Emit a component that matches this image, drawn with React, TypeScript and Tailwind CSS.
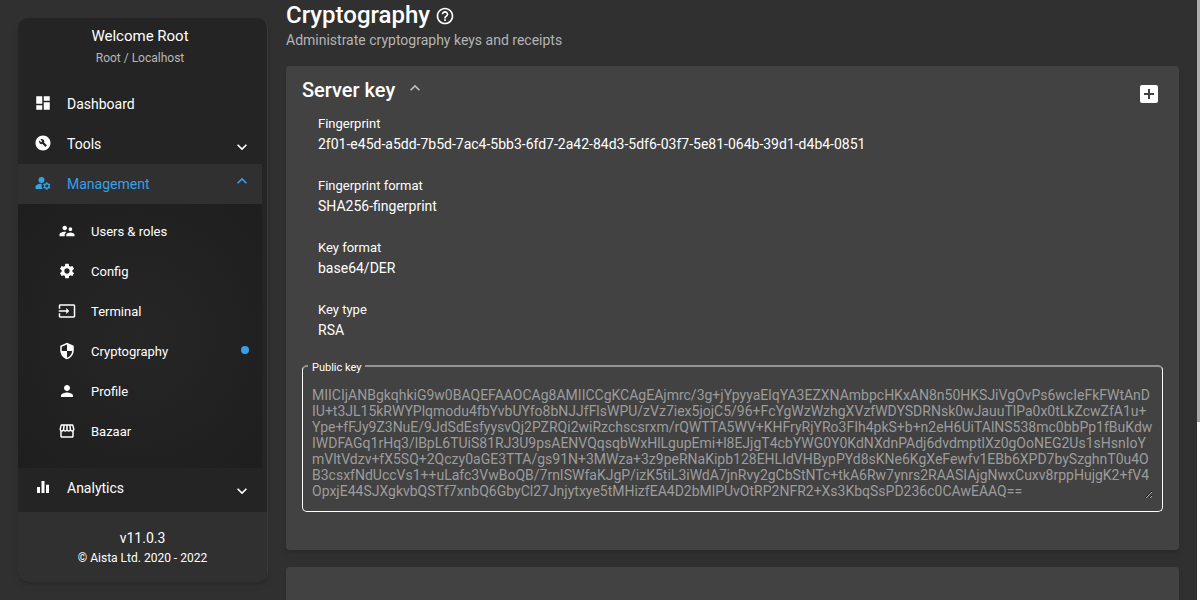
import type { ComponentType } from "react";
import {
  MdAddBox,
  MdBuildCircle,
  MdDashboard,
  MdEqualizer,
  MdHelpOutline,
  MdInput,
  MdKeyboardArrowDown,
  MdKeyboardArrowUp,
  MdManageAccounts,
  MdOutlineStorefront,
  MdPerson,
  MdSecurity,
  MdSettings,
  MdSupervisorAccount,
} from "react-icons/md";

type Icon = ComponentType<{ className?: string }>;

const PUBLIC_KEY = [
  "MIICIjANBgkqhkiG9w0BAQEFAAOCAg8AMIICCgKCAgEAjmrc/3g+jYpyyaElqYA3EZXNAmbpcHKxAN8n50HKSJiVgOvPs6wcIeFkFWtAnD",
  "IU+t3JL15kRWYPlqmodu4fbYvbUYfo8bNJJfFlsWPU/zVz7iex5jojC5/96+FcYgWzWzhgXVzfWDYSDRNsk0wJauuTlPa0x0tLkZcwZfA1u+",
  "Ype+fFJy9Z3NuE/9JdSdEsfyysvQj2PZRQi2wiRzchscsrxm/rQWTTA5WV+KHFryRjYRo3FIh4pkS+b+n2eH6UiTAlNS538mc0bbPp1fBuKdw",
  "IWDFAGq1rHq3/lBpL6TUiS81RJ3U9psAENVQqsqbWxHlLgupEmi+l8EJjgT4cbYWG0Y0KdNXdnPAdj6dvdmptlXz0gOoNEG2Us1sHsnIoY",
  "mVltVdzv+fX5SQ+2Qczy0aGE3TTA/gs91N+3MWza+3z9peRNaKipb128EHLIdVHBypPYd8sKNe6KgXeFewfv1EBb6XPD7bySzghnT0u4O",
  "B3csxfNdUccVs1++uLafc3VwBoQB/7rnISWfaKJgP/izK5tiL3iWdA7jnRvy2gCbStNTc+tkA6Rw7ynrs2RAASIAjgNwxCuxv8rppHujgK2+fV4",
  "OpxjE44SJXgkvbQSTf7xnbQ6GbyCl27Jnjytxye5tMHizfEA4D2bMlPUvOtRP2NFR2+Xs3KbqSsPD236c0CAwEAAQ==",
].join("\n");

const MANAGEMENT: { label: string; icon: Icon; current?: boolean }[] = [
  { label: "Users & roles", icon: MdSupervisorAccount },
  { label: "Config", icon: MdSettings },
  { label: "Terminal", icon: MdInput },
  { label: "Cryptography", icon: MdSecurity, current: true },
  { label: "Profile", icon: MdPerson },
  { label: "Bazaar", icon: MdOutlineStorefront },
];

const DETAILS = [
  ["Fingerprint", "2f01-e45d-a5dd-7b5d-7ac4-5bb3-6fd7-2a42-84d3-5df6-03f7-5e81-064b-39d1-d4b4-0851"],
  ["Fingerprint format", "SHA256-fingerprint"],
  ["Key format", "base64/DER"],
  ["Key type", "RSA"],
];

function Group({ label, icon: GroupIcon, open }: { label: string; icon: Icon; open?: boolean }) {
  return (
    <button
      type="button"
      aria-expanded={!!open}
      className={
        open
          ? "flex h-10 w-full items-center bg-[#303030] px-4 text-[#34a1e8]"
          : "flex h-10 w-full items-center px-4"
      }
    >
      <GroupIcon className="mb-0.5 size-[18px]" />
      <span className="ml-[15px] flex-1 text-left">{label}</span>
      {open ? (
        <MdKeyboardArrowUp className="-mr-1.5 mb-1.5 size-5" />
      ) : (
        <MdKeyboardArrowDown className="-mr-1.5 mt-1.5 size-5" />
      )}
    </button>
  );
}

function Sidebar() {
  return (
    <aside className="flex w-[250px] shrink-0 flex-col self-start overflow-hidden rounded-[10px] border-r border-[#3a3a3a] bg-[#242424] shadow-md">
      <header className="mr-[5px] flex flex-col items-center pt-2 pb-3.5 text-center">
        <h2 className="text-[15px] leading-5">Welcome Root</h2>
        <p className="text-xs leading-6 text-[#b8b8b8]">Root / Localhost</p>
      </header>
      <nav className="mr-[5px] pb-1 text-sm">
        <a href="#dashboard" className="flex h-10 items-center px-4">
          <MdDashboard className="mb-0.5 size-[18px]" />
          <span className="ml-[15px]">Dashboard</span>
        </a>
        <Group label="Tools" icon={MdBuildCircle} />
        <Group label="Management" icon={MdManageAccounts} open />
        <ul className="bg-radial from-[#262626] to-[#1e1e1e] pt-2 pb-4">
          {MANAGEMENT.map(({ label, icon: ItemIcon, current }) => (
            <li key={label}>
              <a
                href={"#" + label.toLowerCase()}
                aria-current={current ? "page" : undefined}
                className="flex h-10 items-center pr-[13px] pl-10 text-[13px]"
              >
                <ItemIcon className="mb-0.5 size-[18px]" />
                <span className="ml-[15px] flex-1">{label}</span>
                {current && <span className="mb-1 size-2 rounded-full bg-[#34a1e8]" />}
              </a>
            </li>
          ))}
        </ul>
        <Group label="Analytics" icon={MdEqualizer} />
      </nav>
      <footer className="bg-[#303030] pt-4 pb-3.5 text-center">
        <p className="text-sm leading-5">v11.0.3</p>
        <p className="text-xs leading-5">© Aista Ltd. 2020 - 2022</p>
      </footer>
    </aside>
  );
}

function ServerKey() {
  return (
    <section className="rounded bg-[#424242] px-4 pt-2 pb-[38px] shadow-md">
      <div className="flex items-center">
        <h2 className="text-xl leading-6 font-medium">Server key</h2>
        <button type="button" aria-label="Collapse server key" className="ml-2.5 text-[#c0c0c0]">
          <MdKeyboardArrowUp className="mb-1 size-5" />
        </button>
        <button type="button" aria-label="Add key" className="ml-auto pt-2">
          <MdAddBox className="mr-0.5 size-6" />
        </button>
      </div>
      <dl className="flex flex-col gap-[22px] px-4 pt-2 text-sm leading-5">
        {DETAILS.map(([term, value]) => (
          <div key={term}>
            <dt className="text-[13px]">{term}</dt>
            <dd>{value}</dd>
          </div>
        ))}
      </dl>
      <fieldset className="mt-4 rounded-[5px] border border-t-2 border-white border-t-[#949494] px-[9px] pb-3">
        <legend className="-ml-1 px-1 pt-1 text-[11px] leading-4">
          <label htmlFor="public-key">Public key</label>
        </legend>
        <textarea
          id="public-key"
          readOnly
          rows={7}
          defaultValue={PUBLIC_KEY}
          className="mt-[11px] block w-full resize overflow-hidden bg-transparent text-sm leading-4 whitespace-pre text-[#9c9c9c] outline-none"
        />
      </fieldset>
    </section>
  );
}

export default function App() {
  return (
    <div className="flex h-screen overflow-hidden bg-[#303030] font-['Roboto',sans-serif] text-white">
      <div className="flex min-w-0 flex-1 gap-[18px] px-[18px]">
        <div className="flex pt-[18px]">
          <Sidebar />
        </div>
        <main className="min-w-0 flex-1">
          <h1 className="flex items-center gap-[5px] text-2xl leading-[30px] font-medium">
            Cryptography
            <MdHelpOutline className="mt-0.5 size-5" />
          </h1>
          <p className="mb-4 text-sm leading-5 text-[#b4b4b4]">Administrate cryptography keys and receipts</p>
          <div className="flex flex-col gap-[17px]">
            <ServerKey />
            <section className="h-40 rounded bg-[#424242] shadow-md" />
          </div>
        </main>
      </div>
      <div className="w-[3px] bg-white">
        <div className="h-[70.3%] bg-[#adadad]" />
      </div>
    </div>
  );
}
